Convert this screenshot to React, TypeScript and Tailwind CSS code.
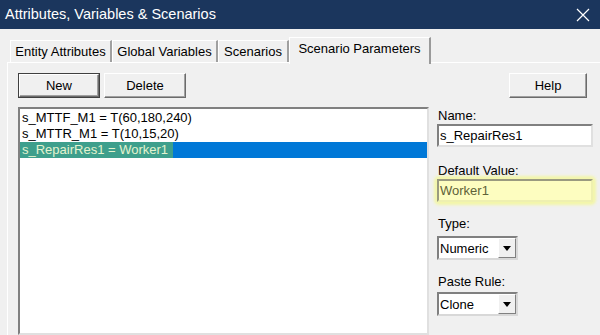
import React from "react";

const ui = { fontFamily: '"Liberation Sans", Arial, sans-serif' };

function Tab({ label, active, w }: { label: string; active?: boolean; w: string }) {
    if (active) {
        return (
            <div
                className={`relative z-10 -mb-[2px] flex h-[27px] items-start justify-center border-l border-t border-r-2 border-l-white border-t-white border-r-[#9a9a9a] bg-[#f0f0f0] pt-[3px] text-[13px] leading-[15px] text-black ${w}`}
            >
                {label}
            </div>
        );
    }
    return (
        <div
            className={`flex h-[22px] items-start justify-center border-l border-t border-r-2 border-l-white border-t-white border-r-[#a0a0a0] bg-[#f0f0f0] pt-[3px] text-[13px] leading-[15px] text-black ${w}`}
        >
            {label}
        </div>
    );
}

function Btn({ label, w, isDefault }: { label: string; w: string; isDefault?: boolean }) {
    return (
        <div className={`${w} h-[25px] ${isDefault ? "border border-[#404040]" : ""}`}>
            <div className="flex h-full w-full items-center justify-center border border-l-white border-t-white border-r-[#6b6b6b] border-b-[#6b6b6b] bg-[#f0f0f0] text-[13px] text-black shadow-[inset_-1px_-1px_0_#a0a0a0]">
                {label}
            </div>
        </div>
    );
}

function Combo({ value }: { value: string }) {
    return (
        <div className="flex h-[24px] w-[81px] border-2 border-l-[#808080] border-t-[#808080] border-r-[#d8d8d8] border-b-[#d8d8d8] bg-white">
            <div className="flex flex-1 items-center pl-[1px] text-[13px] text-black">{value}</div>
            <div className="flex w-[18px] items-center justify-center border border-l-white border-t-white border-r-[#808080] border-b-[#808080] bg-[#f0f0f0]">
                <svg width="8" height="5" viewBox="0 0 8 5">
                    <path d="M0 0h8L4 5z" fill="#000" />
                </svg>
            </div>
        </div>
    );
}

export default function App() {
    return (
        <div className="flex h-[335px] w-[600px] flex-col overflow-hidden bg-[#f0f0f0]" style={ui}>
            {/* Title bar */}
            <div className="flex h-[29px] shrink-0 items-center justify-between bg-[#1b365d] pl-[5px] pr-[8px]">
                <span className="text-[14.5px] text-white">
                    Attributes, Variables &amp; Scenarios
                </span>
                <svg width="14" height="14" viewBox="0 0 14 14" className="mr-[2px]">
                    <path d="M1 1L13 13M13 1L1 13" stroke="#fff" strokeWidth="1.2" />
                </svg>
            </div>

            <div className="flex flex-1 flex-col pl-[7px] pt-[6px]">
                {/* Tabs */}
                <div className="flex h-[27px] items-end pl-[3px]">
                    <Tab label="Entity Attributes" w="w-[102px]" />
                    <Tab label="Global Variables" w="w-[106px]" />
                    <Tab label="Scenarios" w="w-[71px]" />
                    <Tab label="Scenario Parameters" w="w-[142px]" active />
                </div>

                {/* Panel */}
                <div className="flex flex-1 flex-col border-l border-t border-l-white border-t-white pl-[10px] pt-[10px]">
                    <div className="flex items-center">
                        <Btn label="New" w="w-[82px]" isDefault />
                        <div className="w-[4px]" />
                        <Btn label="Delete" w="w-[82px]" />
                        <div className="flex-1" />
                        <div className="mr-[13px]">
                            <Btn label="Help" w="w-[78px]" />
                        </div>
                    </div>

                    <div className="mt-[9px] flex flex-1">
                        {/* List */}
                        <div className="flex w-[411px] flex-col border-2 border-l-[#808080] border-t-[#808080] border-r-[#e0e0e0] border-b-[#e0e0e0] bg-white pt-[1px] text-[13px] leading-[16px] text-black">
                            <div className="pl-[2px]">s_MTTF_M1 = T(60,180,240)</div>
                            <div className="pl-[2px]">s_MTTR_M1 = T(10,15,20)</div>
                            <div className="flex h-[16px] items-center bg-[#0078d7]">
                                <span className="bg-[#3e9f8c] pl-[2px] pr-[5px] text-[#e4f3cf]">
                                    s_RepairRes1 = Worker1
                                </span>
                            </div>
                        </div>

                        {/* Right column */}
                        <div className="ml-[8px] flex w-[156px] flex-col text-[13px] leading-[15px] text-black">
                            <div className="mt-[1px] pl-[1px]">Name:</div>
                            <div className="mt-[1px] flex h-[23px] items-center border-2 border-l-[#808080] border-t-[#808080] border-r-[#e0e0e0] border-b-[#e0e0e0] bg-white pl-[1px]">
                                s_RepairRes1
                            </div>
                            <div className="mt-[16px] pl-[1px]">Default Value:</div>
                            <div className="mt-[1px] rounded-[2px] bg-[#fbfcb8] shadow-[0_0_3px_3px_#f3f6a8]">
                                <div className="flex h-[23px] items-center border-2 border-l-[#9a9a80] border-t-[#9a9a80] border-r-[#eef0b0] border-b-[#eef0b0] bg-[#fdfdc0] pl-[1px] text-[#5f6238]">
                                    Worker1
                                </div>
                            </div>
                            <div className="mt-[14px] pl-[1px]">Type:</div>
                            <div className="mt-[5px]">
                                <Combo value="Numeric" />
                            </div>
                            <div className="mt-[14px] pl-[1px]">Paste Rule:</div>
                            <div className="mt-[3px]">
                                <Combo value="Clone" />
                            </div>
                        </div>
                    </div>
                </div>
            </div>
        </div>
    );
}
